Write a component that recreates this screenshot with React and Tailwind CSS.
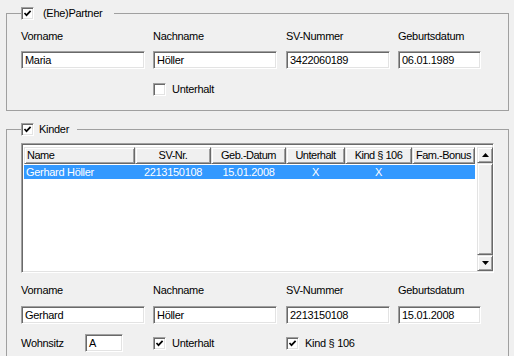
import React from 'react'

// classic 3d edges
const SUNKEN = 'border border-t-[#a0a0a0] border-l-[#a0a0a0] border-b-white border-r-white shadow-[inset_1px_1px_0_#696969,inset_-1px_-1px_0_#e3e3e3]'
const RAISED = 'border border-t-[#e3e3e3] border-l-[#e3e3e3] border-b-[#696969] border-r-[#696969] shadow-[inset_1px_1px_0_#ffffff,inset_-1px_-1px_0_#a0a0a0] bg-[#f0f0f0]'

function Box({ checked }) {
  return (
    <span className={`inline-flex w-[13px] h-[13px] shrink-0 items-center justify-center bg-white ${SUNKEN}`}>
      {checked && (
        <svg width="9" height="9" viewBox="0 0 9 9">
          <path d="M1.5 4 L3.5 6.2 L7.6 1.8" fill="none" stroke="#000" strokeWidth="1.7" />
        </svg>
      )}
    </span>
  )
}

function Check({ checked, label }) {
  return (
    <div className="flex items-center h-[13px]">
      <Box checked={checked} />
      <span className="ml-[6px]">{label}</span>
    </div>
  )
}

function Field({ value, width }) {
  return (
    <div className={`h-[18px] ${width} bg-white ${SUNKEN} pl-[3px] flex items-center whitespace-nowrap`}>
      {value}
    </div>
  )
}

const GRID = 'grid grid-cols-[132px_133px_112px_83px]'

function Labels() {
  return (
    <div className={GRID}>
      <span>Vorname</span>
      <span>Nachname</span>
      <span>SV-Nummer</span>
      <span>Geburtsdatum</span>
    </div>
  )
}

function Inputs({ values }) {
  return (
    <div className={GRID}>
      <Field value={values[0]} width="w-[124px]" />
      <Field value={values[1]} width="w-[124px]" />
      <Field value={values[2]} width="w-[104px]" />
      <Field value={values[3]} width="w-[83px]" />
    </div>
  )
}

const COLUMNS = [
  { label: 'Name', w: 'w-[111px]', align: 'justify-start pl-[2px]' },
  { label: 'SV-Nr.', w: 'w-[76px]', align: 'justify-center' },
  { label: 'Geb.-Datum', w: 'w-[75px]', align: 'justify-center' },
  { label: 'Unterhalt', w: 'w-[59px]', align: 'justify-center' },
  { label: 'Kind § 106', w: 'w-[67px]', align: 'justify-center' },
  { label: 'Fam.-Bonus', w: 'w-[63px]', align: 'justify-center' },
]

const ROW = ['Gerhard Höller', '2213150108', '15.01.2008', 'X', 'X', '']

function Arrow({ up }) {
  return (
    <svg width="7" height="4" viewBox="0 0 7 4">
      <path d={up ? 'M3.5 0 L7 4 L0 4 Z' : 'M0 0 L7 0 L3.5 4 Z'} fill="#000" />
    </svg>
  )
}

function ListView() {
  return (
    <div className={`mt-[7px] w-[473px] h-[130px] bg-white ${SUNKEN} pt-[3px] pl-[2px] flex`}>
      <div className="flex-1">
        <div className="flex h-[17px] tracking-[-0.5px]">
          {COLUMNS.map(c => (
            <div key={c.label} className={`${c.w} ${RAISED} flex items-center ${c.align} whitespace-nowrap overflow-hidden`}>
              {c.label}
            </div>
          ))}
        </div>
        <div className="flex mt-[1px] h-[14px] w-[451px] bg-[#3399ff] text-white">
          {COLUMNS.map((c, i) => (
            <div key={c.label} className={`${c.w} flex items-center ${c.align} whitespace-nowrap`}>
              {ROW[i]}
            </div>
          ))}
        </div>
      </div>
      <div className="w-[16px] h-[124px] flex flex-col">
        <div className={`h-[16px] ${RAISED} flex items-center justify-center`}>
          <Arrow up />
        </div>
        <div className={`flex-1 ${RAISED}`} />
        <div className={`h-[16px] ${RAISED} flex items-center justify-center`}>
          <Arrow />
        </div>
      </div>
    </div>
  )
}

export default function App() {
  return (
    <div className="w-[514px] h-[356px] bg-[#f0f0f0] overflow-hidden pt-[7px] text-[11px] leading-[13px] text-black tracking-[-0.3px] font-['Liberation_Sans',Arial,sans-serif]">
      {/* (Ehe)Partner */}
      <fieldset className="ml-[6px] w-[503px] h-[104px] border border-[#a0a0a0]">
        <legend className="ml-[14px] pr-[12px]">
          <div className="flex items-center h-[13px]">
            <Box checked />
            <span className="ml-[9px]">(Ehe)Partner</span>
          </div>
        </legend>
        <div className="pl-[14px] pt-[10px]">
          <Labels />
          <div className="mt-[8px]">
            <Inputs values={['Maria', 'Höller', '3422060189', '06.01.1989']} />
          </div>
          <div className={`${GRID} mt-[14px]`}>
            <span />
            <Check label="Unterhalt" />
          </div>
        </div>
      </fieldset>

      {/* Kinder */}
      <fieldset className="mt-[12px] ml-[6px] w-[503px] h-[260px] border border-[#a0a0a0]">
        <legend className="ml-[14px] pr-[8px]">
          <div className="flex items-center h-[13px]">
            <Box checked />
            <span className="ml-[5px]">Kinder</span>
          </div>
        </legend>
        <div className="pl-[14px]">
          <ListView />
          <div className="mt-[11px]">
            <Labels />
          </div>
          <div className="mt-[9px]">
            <Inputs values={['Gerhard', 'Höller', '2213150108', '15.01.2008']} />
          </div>
          <div className={`${GRID} mt-[10px] items-center`}>
            <div className="flex items-center">
              <span className="w-[64px]">Wohnsitz</span>
              <Field value="A" width="w-[38px]" />
            </div>
            <Check checked label="Unterhalt" />
            <Check checked label="Kind § 106" />
          </div>
        </div>
      </fieldset>
    </div>
  )
}
